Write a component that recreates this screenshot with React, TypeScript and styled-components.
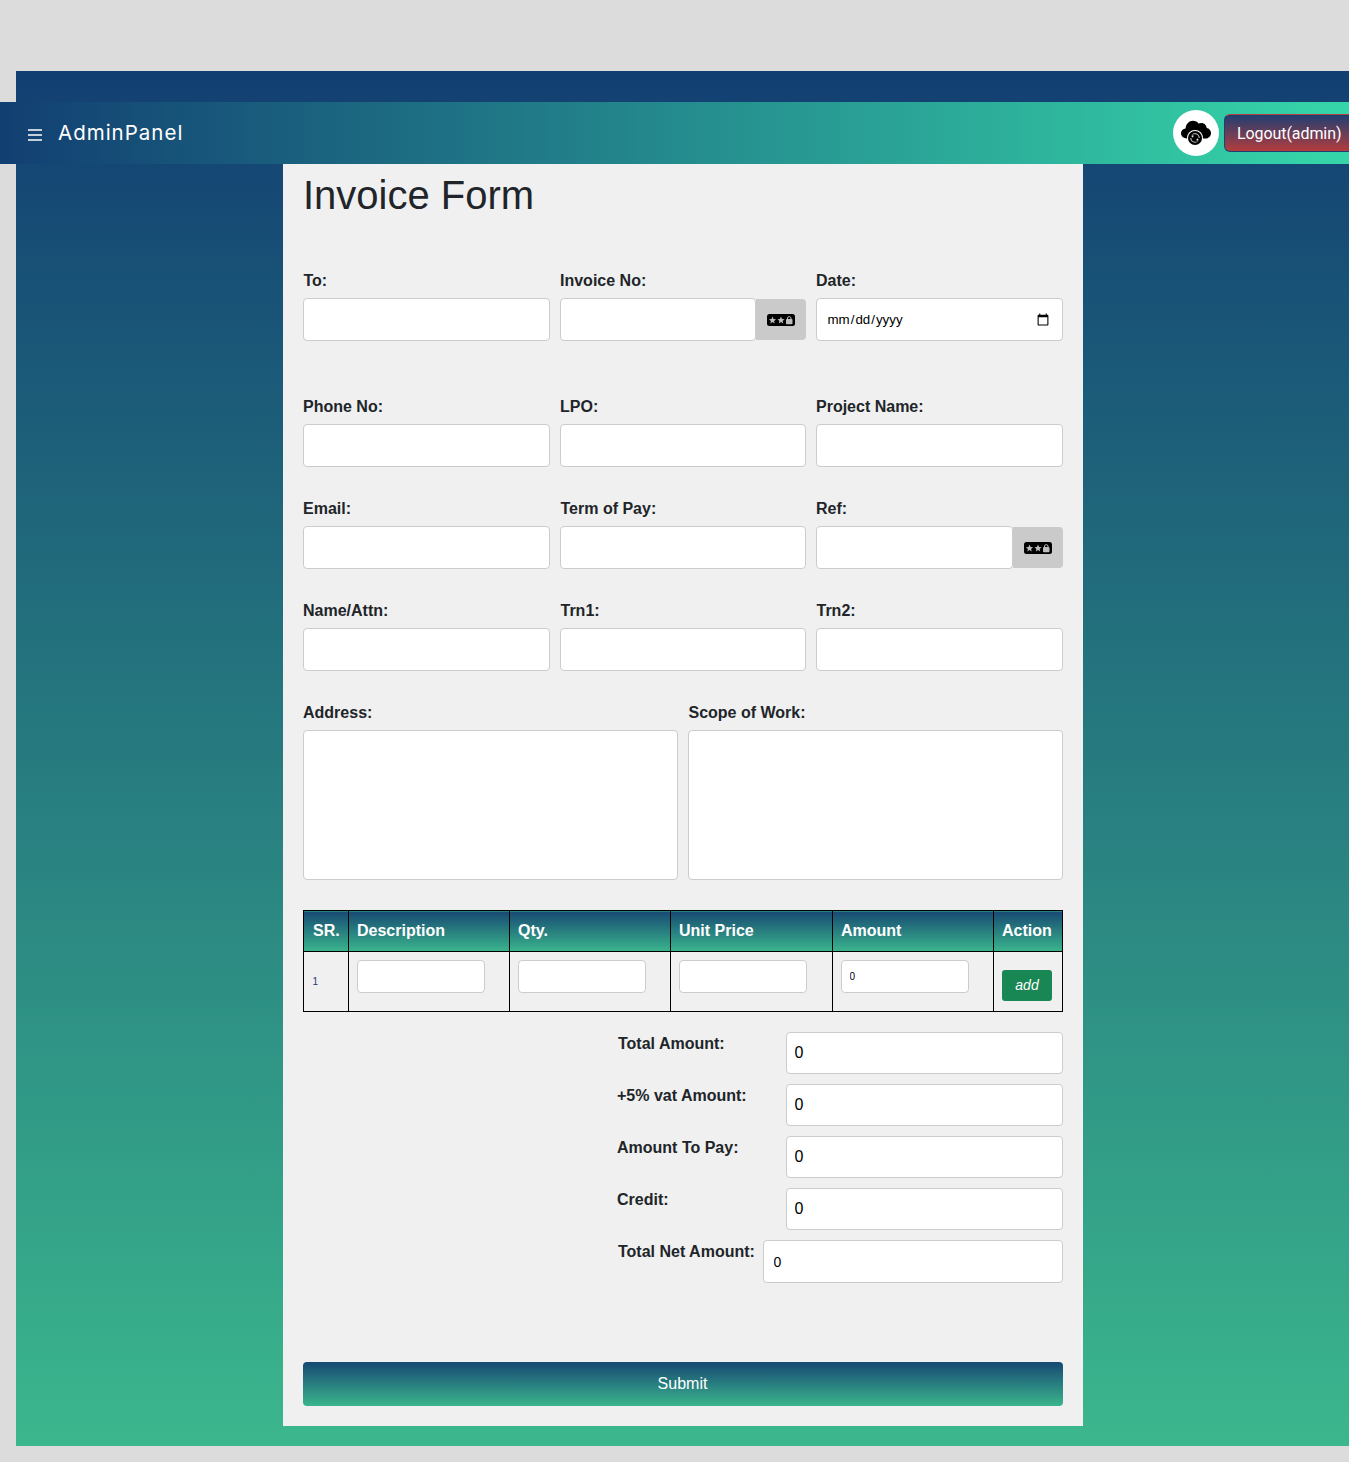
import React from "react";
import styled, { createGlobalStyle } from "styled-components";

const Global = createGlobalStyle`
  html, body { margin: 0; padding: 0; background: #dcdcdc; overflow-x: hidden; }
  body { font-family: "Liberation Sans", Arial, sans-serif; color: #212529; }
  * { box-sizing: border-box; }
`;
const Page = styled.div`
  padding: 71px 0 16px 16px;
  width: 1349px;
  overflow: hidden;
`;
const Shell = styled.main`
  width: 1333px;
  height: 1375px;
  padding-top: 31px;
  background: linear-gradient(180deg, #123f72 0%, #3bb78d 100%);
`;
const Navbar = styled.nav`
  margin-left: -16px;
  width: 1349px;
  height: 62px;
  display: flex;
  align-items: center;
  background: linear-gradient(90deg, #123f72 0%, #36d6a9 100%);
  color: #fff;
  overflow: hidden;
`;
const Burger = styled.span`
  margin-left: 28px;
  width: 14px;
  height: 12px;
  margin-top: 3px;
  border-top: 2px solid #c5d0da;
  border-bottom: 2px solid #c5d0da;
  position: relative;
  &::after {
    content: "";
    position: absolute;
    left: 0;
    right: 0;
    top: 3px;
    height: 2px;
    background: #c5d0da;
  }
`;
const Brand = styled.span`
  margin-left: 16px;
  padding-bottom: 2px;
  font: 400 20.5px Inter, sans-serif;
  letter-spacing: 1px;
  color: #fff;
`;
const Avatar = styled.span`
  margin-left: auto;
  width: 46px;
  height: 46px;
  border-radius: 50%;
  background: #fff;
  display: flex;
  align-items: center;
  justify-content: center;
`;
const Logout = styled.button`
  margin-left: 5px;
  width: 135px;
  flex: none;
  height: 38px;
  margin-right: -10px;
  padding: 0 0 0 12px;
  text-align: left;
  font: 400 16px Roboto, sans-serif;
  letter-spacing: -0.08px;
  color: #fff;
  border: 1px solid;
  border-color: #b33c3e #1f3f72 #1f3f72 #1f3f72;
  border-radius: 6px;
  background: linear-gradient(180deg, #1f3f72 0%, #b33c3e 100%);
`;
const Card = styled.form`
  width: 800px;
  height: 1262px;
  margin: 0 auto;
  padding: 0 20px;
  background: #f0f0f0;
`;
const Title = styled.h1`
  margin: 0;
  padding: 7px 0 0 0.5px;
  font: 400 40px/48px "Liberation Sans", sans-serif;
  color: #212529;
`;
const ThreeCols = styled.div<{ $top: number }>`
  display: grid;
  grid-template-columns: 247px 246px 247px;
  column-gap: 10px;
  margin-top: ${(p) => p.$top}px;
`;
const TwoCols = styled.div`
  display: grid;
  grid-template-columns: repeat(2, 1fr);
  column-gap: 10px;
  margin-top: 33px;
`;
const Field = styled.div`
  display: flex;
  flex-direction: column;
  min-width: 0;
`;
const Label = styled.label<{ $shift?: number }>`
  display: block;
  height: 18px;
  margin-bottom: 8px;
  padding-left: ${(p) => p.$shift ?? 0.5}px;
  font: 700 16px/18px "Liberation Sans", sans-serif;
  color: #212529;
`;
const Input = styled.input`
  display: block;
  width: 100%;
  height: 43px;
  padding: 0 10px;
  background: #fff;
  border: 1px solid #ccc;
  border-radius: 4px;
  font: 400 14px "Liberation Sans", sans-serif;
  color: #000;
  outline: none;
`;
const DateInput = styled(Input)`
  font-size: 13.33px;
`;
const Area = styled.textarea`
  display: block;
  width: 100%;
  height: 150px;
  background: #fff;
  border: 1px solid #ccc;
  border-radius: 4px;
  resize: none;
  outline: none;
`;
const Group = styled.div`
  display: flex;
  height: 43px;
`;
const GroupInput = styled(Input)`
  flex: 1;
  min-width: 0;
`;
const Addon = styled.span`
  flex: none;
  width: 50px;
  height: 41px;
  margin: 1px 0;
  background: #cacaca;
  border-radius: 0 4px 4px 0;
  display: flex;
  align-items: center;
  justify-content: center;
`;
const Table = styled.table`
  width: 760px;
  margin-top: 30px;
  border-collapse: collapse;
  table-layout: fixed;
`;
const Th = styled.th<{ $w: number; $pad?: number }>`
  width: ${(p) => p.$w}px;
  height: 41px;
  padding: 0 0 0 ${(p) => p.$pad ?? 8.5}px;
  text-align: left;
  border: 1px solid #000;
  background: linear-gradient(180deg, #174a73 0%, #3ab58c 100%);
  font: 700 16px "Liberation Sans", sans-serif;
  color: #fff;
`;
const Td = styled.td`
  height: 60px;
  padding: 8px 8px 0;
  vertical-align: top;
  border: 1px solid #000;
`;
const SrCell = styled(Td)`
  padding-top: 20px;
  padding-left: 9px;
  font: 400 10px/20px "Liberation Sans", sans-serif;
  color: #2b3a6e;
`;
const CellInput = styled.input`
  display: block;
  width: 128px;
  height: 33px;
  padding: 0 8px;
  background: #fff;
  border: 1px solid #ccc;
  border-radius: 4px;
  font: 400 10px "Liberation Sans", sans-serif;
  color: #000;
  outline: none;
`;
const AddButton = styled.button`
  display: block;
  margin-top: 10px;
  width: 50px;
  height: 31px;
  padding: 0 0 1px 1px;
  background: #198754;
  border: 0;
  border-radius: 3px;
  font: italic 400 14px "Liberation Sans", sans-serif;
  color: #fff;
`;
const Totals = styled.div`
  margin-top: 20px;
  display: flex;
  flex-direction: column;
  gap: 10px;
`;
const TotalRow = styled.div<{ $inputWidth: number }>`
  display: grid;
  grid-template-columns: minmax(0, 1fr) ${(p) => p.$inputWidth}px;
  column-gap: 10px;
`;
const TotalLabel = styled.label<{ $left: number }>`
  padding-left: ${(p) => p.$left}px;
  padding-top: 3px;
  font: 700 16px/18px "Liberation Sans", sans-serif;
  color: #212529;
  white-space: nowrap;
`;
const TotalInput = styled.input<{ $h: number }>`
  display: block;
  width: 100%;
  height: ${(p) => p.$h}px;
  padding: 0 8px;
  background: #fff;
  border: 1px solid #ccc;
  border-radius: 4px;
  font: 400 16px "Liberation Sans", sans-serif;
  color: #000;
  outline: none;
`;
const NetInput = styled(TotalInput)`
  padding: 0 10px;
  font-size: 14px;
`;
const Submit = styled.button`
  display: block;
  width: 100%;
  height: 44px;
  margin-top: 79px;
  border: 0;
  border-radius: 4px;
  background: linear-gradient(180deg, #164873 0%, #3ab58c 100%);
  font: 400 16px "Liberation Sans", sans-serif;
  color: #fff;
`;

const CloudIcon = () => (
  <svg width="30" height="26" viewBox="0 0 30 26" aria-hidden="true">
    <path
      fill="#000"
      d="M6 18.500C2.500 18.500 0 16.200 0 13.300c0-2.600 2-4.600 4.600-4.800C5 4 8 .8 12 .8c2.400 0 4.300 1 5.500 2.800 .9-.5 1.900-.7 2.900-.7 3 0 5 2.200 5.300 5 2.500.4 4.300 2.400 4.300 5 0 3-2.300 5.600-5.800 5.600z"
    />
    <circle cx="14" cy="18" r="8" fill="#fff" />
    <circle cx="14" cy="18" r="7" fill="#000" />
    <circle cx="14" cy="18" r="4.200" fill="none" stroke="#d0d0d0" strokeWidth="1.100" />
    <path fill="#000" d="M9 14.500h4.500v3.500H9zM14.500 18H19v3.500h-4.500z" />
    <path fill="#e0e0e0" d="M10.800 15.300l1.800.3-.5 1.800-1.500-.5zM17.200 20.700l-1.800-.3.500-1.800 1.500.5z" />
  </svg>
);

const Star = ({ x }: { x: number }) => (
  <path
    fill="#bdbdbd"
    transform={`translate(${x} 6.200) scale(1.150)`}
    d="M0-3.200l.9 2.100 2.200.2-1.700 1.500.5 2.200L0 1.600l-1.900 1.200.5-2.200L-3.100-.9l2.200-.2z"
  />
);

const PassIcon = () => (
  <svg width="28" height="12" viewBox="0 0 28 12" aria-hidden="true">
    <rect width="28" height="12" rx="2.500" fill="#000" />
    <Star x={5.500} />
    <Star x={14} />
    <rect x="19" y="5" width="6.500" height="5.200" rx="1" fill="#bdbdbd" />
    <path d="M20.500 5.500V4a1.800 1.800 0 0 1 3.500 0v1.500" fill="none" stroke="#bdbdbd" strokeWidth="1" />
  </svg>
);

export default function App() {
  return (
    <>
      <Global />
      <Page>
        <Shell>
          <Navbar>
            <Burger />
            <Brand>AdminPanel</Brand>
            <Avatar>
              <CloudIcon />
            </Avatar>
            <Logout type="button">Logout(admin)</Logout>
          </Navbar>
          <Card>
            <Title>Invoice Form</Title>
            <ThreeCols $top={53}>
              <Field>
                <Label $shift={1}>To:</Label>
                <Input />
              </Field>
              <Field>
                <Label>Invoice No:</Label>
                <Group>
                  <GroupInput />
                  <Addon>
                    <PassIcon />
                  </Addon>
                </Group>
              </Field>
              <Field>
                <Label>Date:</Label>
                <DateInput type="date" />
              </Field>
            </ThreeCols>
            <ThreeCols $top={57}>
              <Field>
                <Label>Phone No:</Label>
                <Input />
              </Field>
              <Field>
                <Label>LPO:</Label>
                <Input />
              </Field>
              <Field>
                <Label>Project Name:</Label>
                <Input />
              </Field>
            </ThreeCols>
            <ThreeCols $top={33}>
              <Field>
                <Label>Email:</Label>
                <Input />
              </Field>
              <Field>
                <Label $shift={1}>Term of Pay:</Label>
                <Input />
              </Field>
              <Field>
                <Label>Ref:</Label>
                <Group>
                  <GroupInput />
                  <Addon>
                    <PassIcon />
                  </Addon>
                </Group>
              </Field>
            </ThreeCols>
            <ThreeCols $top={33}>
              <Field>
                <Label>Name/Attn:</Label>
                <Input />
              </Field>
              <Field>
                <Label $shift={1}>Trn1:</Label>
                <Input />
              </Field>
              <Field>
                <Label $shift={1}>Trn2:</Label>
                <Input />
              </Field>
            </ThreeCols>
            <TwoCols>
              <Field>
                <Label>Address:</Label>
                <Area />
              </Field>
              <Field>
                <Label $shift={1}>Scope of Work:</Label>
                <Area />
              </Field>
            </TwoCols>
            <Table>
              <thead>
                <tr>
                  <Th $w={45} $pad={9.5}>SR.</Th>
                  <Th $w={161}>Description</Th>
                  <Th $w={161}>Qty.</Th>
                  <Th $w={162}>Unit Price</Th>
                  <Th $w={161}>Amount</Th>
                  <Th $w={69}>Action</Th>
                </tr>
              </thead>
              <tbody>
                <tr>
                  <SrCell>1</SrCell>
                  <Td>
                    <CellInput />
                  </Td>
                  <Td>
                    <CellInput />
                  </Td>
                  <Td>
                    <CellInput />
                  </Td>
                  <Td>
                    <CellInput defaultValue="0" />
                  </Td>
                  <Td>
                    <AddButton type="button">add</AddButton>
                  </Td>
                </tr>
              </tbody>
            </Table>
            <Totals>
              <TotalRow $inputWidth={277}>
                <TotalLabel $left={315.5}>Total Amount:</TotalLabel>
                <TotalInput $h={42} defaultValue="0" />
              </TotalRow>
              <TotalRow $inputWidth={277}>
                <TotalLabel $left={314.5}>+5% vat Amount:</TotalLabel>
                <TotalInput $h={42} defaultValue="0" />
              </TotalRow>
              <TotalRow $inputWidth={277}>
                <TotalLabel $left={314.5}>Amount To Pay:</TotalLabel>
                <TotalInput $h={42} defaultValue="0" />
              </TotalRow>
              <TotalRow $inputWidth={277}>
                <TotalLabel $left={314.5}>Credit:</TotalLabel>
                <TotalInput $h={42} defaultValue="0" />
              </TotalRow>
              <TotalRow $inputWidth={300}>
                <TotalLabel $left={315.5}>Total Net Amount:</TotalLabel>
                <NetInput $h={43} defaultValue="0" />
              </TotalRow>
            </Totals>
            <Submit type="button">Submit</Submit>
          </Card>
        </Shell>
      </Page>
    </>
  );
}
